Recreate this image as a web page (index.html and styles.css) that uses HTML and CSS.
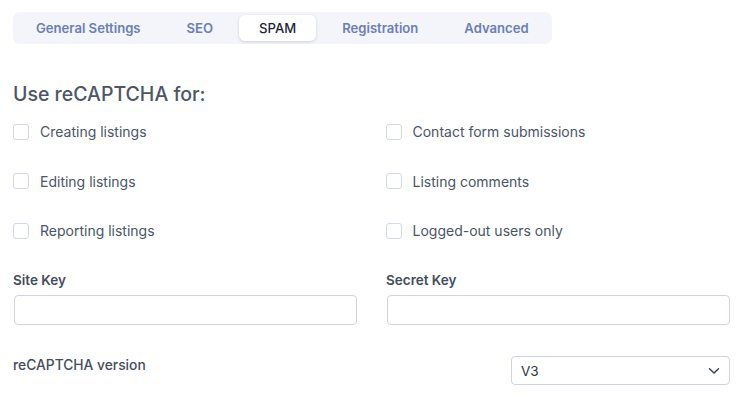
FILE: index.html
```html
<!DOCTYPE html>
<html lang="en">
<head>
<meta charset="utf-8">
<title>SPAM settings</title>
<link rel="stylesheet" href="styles.css">
</head>
<body>
<div class="page">
  <nav class="tabs">
    <span class="tab">General Settings</span>
    <span class="tab">SEO</span>
    <span class="tab active">SPAM</span>
    <span class="tab">Registration</span>
    <span class="tab">Advanced</span>
  </nav>

  <h2 class="heading">Use reCAPTCHA for:</h2>

  <div class="checks">
    <label class="check"><span class="box"></span>Creating listings</label>
    <label class="check"><span class="box"></span>Contact form submissions</label>
    <label class="check"><span class="box"></span>Editing listings</label>
    <label class="check"><span class="box"></span>Listing comments</label>
    <label class="check"><span class="box"></span>Reporting listings</label>
    <label class="check"><span class="box"></span>Logged-out users only</label>
  </div>

  <div class="keys">
    <div class="field">
      <div class="field-label">Site Key</div>
      <div class="input"></div>
    </div>
    <div class="field">
      <div class="field-label">Secret Key</div>
      <div class="input"></div>
    </div>
  </div>

  <div class="version">
    <div class="field-label">reCAPTCHA version</div>
    <div class="select">
      <span>V3</span>
      <svg class="chev" width="12" height="8" viewBox="0 0 12 8"><path d="M1.5 1.8 L6 6 L10.5 1.8" fill="none" stroke="#3b4452" stroke-width="1.5" stroke-linecap="round" stroke-linejoin="round"/></svg>
    </div>
  </div>
</div>
</body>
</html>
```

FILE: styles.css
```css
* { box-sizing: border-box; }
html, body { margin: 0; padding: 0; background: #fff; }
body {
  font-family: Inter, "Noto Sans", "Liberation Sans", sans-serif;
  color: #4a5568;
}
.page {
  width: 717px;
  margin-left: 13px;
  padding-top: 12px;
}
.tabs {
  display: inline-flex;
  gap: 6px;
  padding: 3px;
  background: #f3f5fa;
  border-radius: 7px;
  height: 32px;
}
.tab {
  display: flex;
  align-items: center;
  padding: 0 20px;
  height: 26px;
  font-size: 13.1px;
  font-weight: 600;
  color: #6b80b5;
  border-radius: 6px;
}
.tab.active {
  background: #fff;
  color: #1b2537;
  font-weight: 500;
  box-shadow: 0 1px 3px rgba(30, 40, 60, 0.18);
}
.heading {
  margin: 38px 0 0;
  font-size: 19.5px;
  font-weight: 500;
  color: #4c5667;
  line-height: 24px;
}
.checks {
  display: grid;
  grid-template-columns: 1fr 1fr;
  grid-auto-rows: 49.5px;
  column-gap: 28px;
  margin-top: 1px;
}
.check {
  display: flex;
  align-items: center;
  font-size: 14px;
  color: #4a5568;
}
.box {
  width: 16px;
  height: 16px;
  border: 1px solid #d3d9e3;
  border-radius: 3px;
  margin-right: 11px;
  flex: none;
  background: #fff;
}
.keys {
  display: grid;
  grid-template-columns: 1fr 1fr;
  column-gap: 29px;
  margin-top: 15.5px;
}
.field-label {
  font-size: 13.5px;
  font-weight: 600;
  color: #434d5d;
  line-height: 18px;
}
.input {
  margin-top: 6px;
  margin-left: 1px;
  height: 30px;
  border: 1px solid #cdd4e0;
  border-radius: 4px;
  background: #fff;
}
.version {
  display: flex;
  justify-content: space-between;
  align-items: flex-start;
  margin-top: 31px;
}
.version .field-label { font-weight: 500; font-size: 13.8px; margin-top: 0; }
.select {
  width: 219px;
  height: 29px;
  border: 1px solid #cdd4e0;
  border-radius: 4px;
  display: flex;
  align-items: center;
  justify-content: space-between;
  padding: 0 9px 0 9px;
  font-size: 13.5px;
  color: #2d3646;
}
.chev { display: block; }
```
